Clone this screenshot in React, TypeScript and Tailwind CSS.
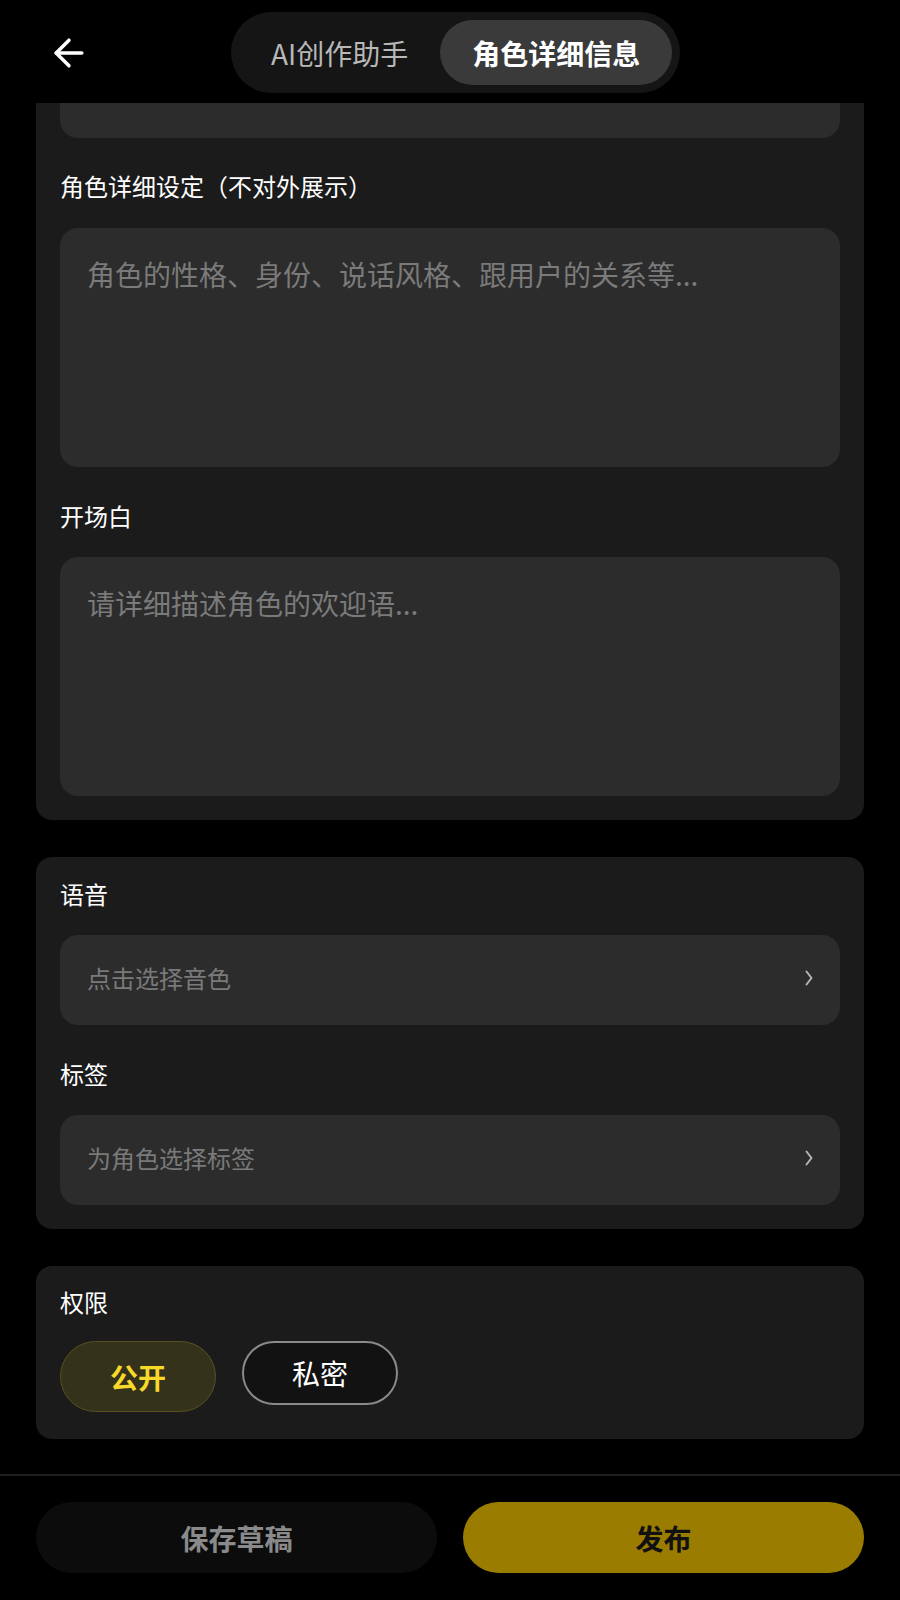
import { ArrowLeft } from "lucide-react"

function Chevron() {
  return (
    <svg width="10" height="16" viewBox="0 0 10 16" fill="none">
      <polyline points="2.5,1.5 7.5,8 2.5,14.5" stroke="#b5b5b5" strokeWidth="2" strokeLinecap="round" strokeLinejoin="round" />
    </svg>
  )
}

function Label({ text, className = "" }: { text: string; className?: string }) {
  return <p className={`text-[24px] leading-7 text-white ${className}`}>{text}</p>
}

function Picker({ placeholder, className = "" }: { placeholder: string; className?: string }) {
  return (
    <button className={`flex h-[90px] w-full items-center justify-between rounded-[18px] bg-[#2c2c2c] pb-1 pl-[27px] pr-[26px] ${className}`}>
      <span className="text-[24px] leading-8 text-[#7a7a7a]">{placeholder}</span>
      <Chevron />
    </button>
  )
}

export default function App() {
  return (
    <div className="flex h-[1600px] w-[900px] flex-col overflow-hidden bg-black font-['Noto_Sans_CJK_SC','Noto_Sans',sans-serif]">
      {/* header */}
      <div className="flex items-center pl-[47px] pt-3 pb-[10px]">
        <ArrowLeft size={44} strokeWidth={1.9} className="text-white" />
        <div className="ml-[140px] flex h-[81px] items-center rounded-full bg-[#151515] p-2">
          <button className="flex h-[65px] items-center px-8 text-[28px] text-[#b8b8b8]">AI创作助手</button>
          <button className="flex h-[65px] items-center rounded-full bg-[#3a3a3a] px-8 text-[28px] font-bold text-white">角色详细信息</button>
        </div>
      </div>

      <div className="px-9">
        {/* basic card (scrolled, top clipped) */}
        <div className="rounded-b-2xl bg-[#1b1b1b] px-6 pb-6">
          <div className="h-[35px] rounded-b-[18px] bg-[#2c2c2c]" />
          <Label text="角色详细设定（不对外展示）" className="mt-[34px]" />
          <textarea
            placeholder="角色的性格、身份、说话风格、跟用户的关系等..."
            className="mt-7 block h-[239px] w-full resize-none rounded-[18px] bg-[#2c2c2c] px-[27px] pt-[26px] text-[28px] leading-10 text-white outline-none placeholder:text-[#7a7a7a]"
          />
          <Label text="开场白" className="mt-[35px]" />
          <textarea
            placeholder="请详细描述角色的欢迎语..."
            className="mt-[27px] block h-[239px] w-full resize-none rounded-[18px] bg-[#2c2c2c] px-[27px] pt-[26px] text-[28px] leading-10 text-white outline-none placeholder:text-[#7a7a7a]"
          />
        </div>

        {/* voice & tags */}
        <div className="mt-[37px] rounded-2xl bg-[#1b1b1b] px-6 pt-[23px] pb-6">
          <Label text="语音" />
          <Picker placeholder="点击选择音色" className="mt-[27px] h-[89px]" />
          <Label text="标签" className="mt-[35px]" />
          <Picker placeholder="为角色选择标签" className="mt-[27px]" />
        </div>

        {/* permission */}
        <div className="mt-[37px] rounded-2xl bg-[#1b1b1b] px-6 pt-[22px] pb-[27px]">
          <Label text="权限" />
          <div className="mt-[25px] flex items-start gap-[26px]">
            <button className="flex h-[71px] w-[156px] items-center justify-center rounded-full border-[1.5px] border-[#5a511f] bg-[#35321c] text-[28px] font-bold text-[#f7d92a]">
              公开
            </button>
            <button className="flex h-[64px] w-[156px] items-center justify-center rounded-full border-2 border-[#8a8a8a] bg-[#121212] text-[28px] font-normal text-white">
              私密
            </button>
          </div>
        </div>
      </div>

      {/* footer */}
      <div className="mt-auto flex gap-[26px] border-t-2 border-[#1f1f1f] px-9 pt-[26px] pb-[27px]">
        <button className="flex h-[71px] flex-1 items-center justify-center rounded-full bg-[#0c0c0c] text-[28px] font-bold text-[#8a8a8a]">
          保存草稿
        </button>
        <button className="flex h-[71px] flex-1 items-center justify-center rounded-full bg-[#9a7d00] text-[28px] font-bold text-[#111]">
          发布
        </button>
      </div>
    </div>
  )
}
